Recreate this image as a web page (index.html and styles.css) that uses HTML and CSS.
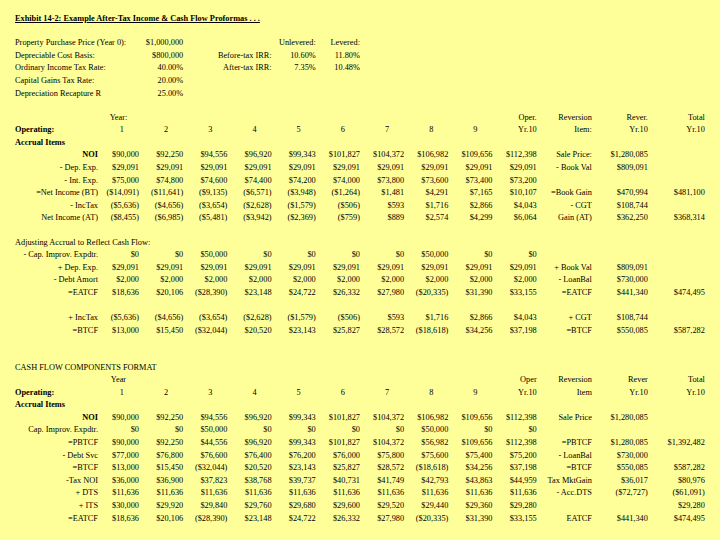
FILE: index.html
```html
<!DOCTYPE html>
<html>
<head>
<meta charset="utf-8">
<link rel="stylesheet" href="styles.css">
</head>
<body>
<div class="sheet">
  <div class="title">Exhibit 14-2: Example After-Tax Income &amp; Cash Flow Proformas . . .</div>
  <div class="gap g1"></div>

  <div class="row"><span class="plab">Property Purchase Price (Year 0):</span><span>$1,000,000</span><span class="irr"></span><span>Unlevered:</span><span>Levered:</span></div>
  <div class="row"><span class="plab">Depreciable Cost Basis:</span><span>$800,000</span><span class="irr">Before-tax IRR:</span><span>10.60%</span><span>11.80%</span></div>
  <div class="row"><span class="plab">Ordinary Income Tax Rate:</span><span>40.00%</span><span class="irr">After-tax IRR:</span><span>7.35%</span><span>10.48%</span></div>
  <div class="row"><span class="plab">Capital Gains Tax Rate:</span><span>20.00%</span></div>
  <div class="row"><span class="plab">Depreciation Recapture R</span><span>25.00%</span></div>
  <div class="gap g2"></div>

  <div class="row"><span></span><span class="ctr">Year:</span><span class="c-op">Oper.</span><span class="c-it">Reversion</span><span class="c-rv">Rever.</span><span class="c-tt">Total</span></div>
  <div class="row"><span class="l b">Operating:</span><span class="hn">1</span><span class="hn">2</span><span class="hn">3</span><span class="hn">4</span><span class="hn">5</span><span class="hn">6</span><span class="hn">7</span><span class="hn">8</span><span class="hn">9</span><span>Yr.10</span><span>Item:</span><span>Yr.10</span><span>Yr.10</span></div>
  <div class="row"><span class="lw b">Accrual Items</span></div>
  <div class="row"><span class="b">NOI</span><span>$90,000</span><span>$92,250</span><span>$94,556</span><span>$96,920</span><span>$99,343</span><span>$101,827</span><span>$104,372</span><span>$106,982</span><span>$109,656</span><span>$112,398</span><span>Sale Price:</span><span>$1,280,085</span><span></span></div>
  <div class="row"><span>- Dep. Exp.</span><span>$29,091</span><span>$29,091</span><span>$29,091</span><span>$29,091</span><span>$29,091</span><span>$29,091</span><span>$29,091</span><span>$29,091</span><span>$29,091</span><span>$29,091</span><span>- Book Val</span><span>$809,091</span><span></span></div>
  <div class="row"><span>- Int. Exp.</span><span>$75,000</span><span>$74,800</span><span>$74,600</span><span>$74,400</span><span>$74,200</span><span>$74,000</span><span>$73,800</span><span>$73,600</span><span>$73,400</span><span>$73,200</span><span></span><span></span><span></span></div>
  <div class="row"><span>=Net Income (BT)</span><span>($14,091)</span><span>($11,641)</span><span>($9,135)</span><span>($6,571)</span><span>($3,948)</span><span>($1,264)</span><span>$1,481</span><span>$4,291</span><span>$7,165</span><span>$10,107</span><span>=Book Gain</span><span>$470,994</span><span>$481,100</span></div>
  <div class="row"><span>- IncTax</span><span>($5,636)</span><span>($4,656)</span><span>($3,654)</span><span>($2,628)</span><span>($1,579)</span><span>($506)</span><span>$593</span><span>$1,716</span><span>$2,866</span><span>$4,043</span><span>- CGT</span><span>$108,744</span><span></span></div>
  <div class="row"><span>Net Income (AT)</span><span>($8,455)</span><span>($6,985)</span><span>($5,481)</span><span>($3,942)</span><span>($2,369)</span><span>($759)</span><span>$889</span><span>$2,574</span><span>$4,299</span><span>$6,064</span><span>Gain (AT)</span><span>$362,250</span><span>$368,314</span></div>
  <div class="gap g3"></div>

  <div class="row"><span class="lw">Adjusting Accrual to Reflect Cash Flow:</span></div>
  <div class="row"><span>- Cap. Improv. Expdtr.</span><span>$0</span><span>$0</span><span>$50,000</span><span>$0</span><span>$0</span><span>$0</span><span>$0</span><span>$50,000</span><span>$0</span><span>$0</span><span></span><span></span><span></span></div>
  <div class="row"><span>+ Dep. Exp.</span><span>$29,091</span><span>$29,091</span><span>$29,091</span><span>$29,091</span><span>$29,091</span><span>$29,091</span><span>$29,091</span><span>$29,091</span><span>$29,091</span><span>$29,091</span><span>+ Book Val</span><span>$809,091</span><span></span></div>
  <div class="row"><span>- Debt Amort</span><span>$2,000</span><span>$2,000</span><span>$2,000</span><span>$2,000</span><span>$2,000</span><span>$2,000</span><span>$2,000</span><span>$2,000</span><span>$2,000</span><span>$2,000</span><span>- LoanBal</span><span>$730,000</span><span></span></div>
  <div class="row"><span>=EATCF</span><span>$18,636</span><span>$20,106</span><span>($28,390)</span><span>$23,148</span><span>$24,722</span><span>$26,332</span><span>$27,980</span><span>($20,335)</span><span>$31,390</span><span>$33,155</span><span>=EATCF</span><span>$441,340</span><span>$474,495</span></div>
  <div class="gap g0"></div>
  <div class="row"><span>+ IncTax</span><span>($5,636)</span><span>($4,656)</span><span>($3,654)</span><span>($2,628)</span><span>($1,579)</span><span>($506)</span><span>$593</span><span>$1,716</span><span>$2,866</span><span>$4,043</span><span>+ CGT</span><span>$108,744</span><span></span></div>
  <div class="row"><span>=BTCF</span><span>$13,000</span><span>$15,450</span><span>($32,044)</span><span>$20,520</span><span>$23,143</span><span>$25,827</span><span>$28,572</span><span>($18,618)</span><span>$34,256</span><span>$37,198</span><span>=BTCF</span><span>$550,085</span><span>$587,282</span></div>
  <div class="gap g4"></div>

  <div class="row"><span class="lw">CASH FLOW COMPONENTS FORMAT</span></div>
  <div class="row"><span></span><span class="ctr">Year</span><span class="c-op">Oper</span><span class="c-it">Reversion</span><span class="c-rv">Rever</span><span class="c-tt">Total</span></div>
  <div class="row"><span class="l b">Operating:</span><span class="hn">1</span><span class="hn">2</span><span class="hn">3</span><span class="hn">4</span><span class="hn">5</span><span class="hn">6</span><span class="hn">7</span><span class="hn">8</span><span class="hn">9</span><span>Yr.10</span><span>Item</span><span>Yr.10</span><span>Yr.10</span></div>
  <div class="row"><span class="lw b">Accrual Items</span></div>
  <div class="row"><span class="b">NOI</span><span>$90,000</span><span>$92,250</span><span>$94,556</span><span>$96,920</span><span>$99,343</span><span>$101,827</span><span>$104,372</span><span>$106,982</span><span>$109,656</span><span>$112,398</span><span>Sale Price</span><span>$1,280,085</span><span></span></div>
  <div class="row"><span>Cap. Improv. Expdtr.</span><span>$0</span><span>$0</span><span>$50,000</span><span>$0</span><span>$0</span><span>$0</span><span>$0</span><span>$50,000</span><span>$0</span><span>$0</span><span></span><span></span><span></span></div>
  <div class="row"><span>=PBTCF</span><span>$90,000</span><span>$92,250</span><span>$44,556</span><span>$96,920</span><span>$99,343</span><span>$101,827</span><span>$104,372</span><span>$56,982</span><span>$109,656</span><span>$112,398</span><span>=PBTCF</span><span>$1,280,085</span><span>$1,392,482</span></div>
  <div class="row"><span>- Debt Svc</span><span>$77,000</span><span>$76,800</span><span>$76,600</span><span>$76,400</span><span>$76,200</span><span>$76,000</span><span>$75,800</span><span>$75,600</span><span>$75,400</span><span>$75,200</span><span>- LoanBal</span><span>$730,000</span><span></span></div>
  <div class="row"><span>=BTCF</span><span>$13,000</span><span>$15,450</span><span>($32,044)</span><span>$20,520</span><span>$23,143</span><span>$25,827</span><span>$28,572</span><span>($18,618)</span><span>$34,256</span><span>$37,198</span><span>=BTCF</span><span>$550,085</span><span>$587,282</span></div>
  <div class="row"><span>-Tax NOI</span><span>$36,000</span><span>$36,900</span><span>$37,823</span><span>$38,768</span><span>$39,737</span><span>$40,731</span><span>$41,749</span><span>$42,793</span><span>$43,863</span><span>$44,959</span><span>Tax MktGain</span><span>$36,017</span><span>$80,976</span></div>
  <div class="row"><span>+ DTS</span><span>$11,636</span><span>$11,636</span><span>$11,636</span><span>$11,636</span><span>$11,636</span><span>$11,636</span><span>$11,636</span><span>$11,636</span><span>$11,636</span><span>$11,636</span><span>- Acc.DTS</span><span>($72,727)</span><span>($61,091)</span></div>
  <div class="row"><span>+ ITS</span><span>$30,000</span><span>$29,920</span><span>$29,840</span><span>$29,760</span><span>$29,680</span><span>$29,600</span><span>$29,520</span><span>$29,440</span><span>$29,360</span><span>$29,280</span><span></span><span></span><span>$29,280</span></div>
  <div class="row"><span>=EATCF</span><span>$18,636</span><span>$20,106</span><span>($28,390)</span><span>$23,148</span><span>$24,722</span><span>$26,332</span><span>$27,980</span><span>($20,335)</span><span>$31,390</span><span>$33,155</span><span>EATCF</span><span>$441,340</span><span>$474,495</span></div>
</div>
</body>
</html>
```

FILE: styles.css
```css
html, body {
  margin: 0;
  background: #ffff99;
}

body {
  font-family: "Liberation Serif", "Times New Roman", serif;
  font-size: 8.3px;
  color: #000;
  width: 720px;
  height: 540px;
  overflow: hidden;
}

.sheet {
  padding: 13.2px 15px 0 15px;
}

.title {
  height: 12.6px;
  line-height: 12.6px;
  font-weight: bold;
  text-decoration: underline;
  white-space: nowrap;
}

.row {
  display: grid;
  grid-template-columns: 83px 41px repeat(9, 44.2px) 55.2px 56px 57px;
  height: 12.6px;
  line-height: 12.6px;
  white-space: nowrap;
}

.row > span {
  text-align: right;
}

.row > .l {
  text-align: left;
}

.row > .lw {
  grid-column: 1 / 8;
  text-align: left;
}

.row > .plab {
  grid-column: 1 / 3;
  text-align: left;
}

.row > .irr {
  grid-column: 4 / 6;
}

.row > .ctr {
  text-align: center;
}

.row > .hn {
  padding-right: 15px;
}

.c-op { grid-column: 11; }
.c-it { grid-column: 12; }
.c-rv { grid-column: 13; }
.c-tt { grid-column: 14; }

.b {
  font-weight: bold;
}

.gap { height: 12.6px; }
.g1 { height: 11.4px; }
.g2 { height: 11.5px; }
.g3 { height: 11.6px; }
.g0 { height: 12.6px; }
.g4 { height: 24.2px; }
```
